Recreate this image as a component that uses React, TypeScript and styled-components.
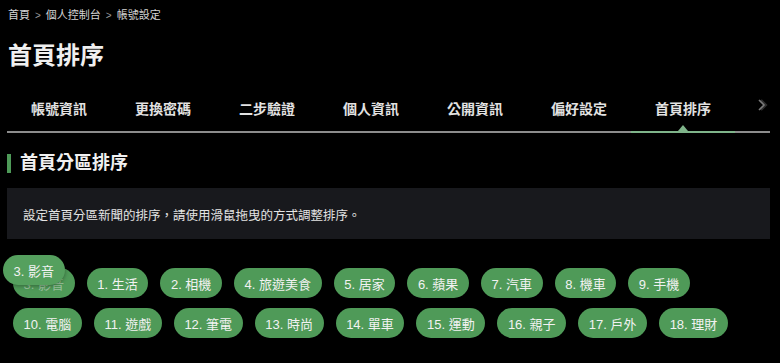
import styled, { createGlobalStyle } from 'styled-components';

const GlobalStyle = createGlobalStyle`
	html, body {
		margin: 0;
		padding: 0;
		background: #000;
	}
	body {
		font-family: 'Liberation Sans', 'Noto Sans CJK TC', sans-serif;
		color: #e6e6e6;
	}
`;

const Page = styled.div`
	width: 780px;
	height: 363px;
	box-sizing: border-box;
	padding: 0 10px 0 7px;
	position: relative;
	overflow: hidden;
`;

const Breadcrumb = styled.nav`
	display: flex;
	align-items: center;
	gap: 5px;
	padding: 9px 0 0 1px;
	height: 13px;
	font-size: 11px;
	line-height: 13px;
	color: #d4d4d4;
	.sep {
		color: #9a9a9a;
		font-size: 10px;
	}
`;

const Title = styled.h1`
	margin: 0;
	padding: 20px 0 0 1px;
	font-size: 24px;
	line-height: 28px;
	font-weight: bold;
	color: #f0f0f0;
`;

const TabBar = styled.div`
	margin-top: 26px;
	display: flex;
	align-items: stretch;
	border-bottom: 2px solid #8c8c8c;
	height: 35px;
`;

const Tab = styled.div<{ active?: boolean }>`
	position: relative;
	width: 104px;
	flex: none;
	text-align: center;
	font-size: 14px;
	font-weight: bold;
	line-height: 16px;
	padding-top: 5px;
	color: #e2e2e2;
	${(p) =>
		p.active &&
		`
		margin-bottom: -2px;
		border-bottom: 2px solid #7fb48a;
		&::after {
			content: '';
			position: absolute;
			left: 50%;
			bottom: 0;
			transform: translateX(-50%);
			border-left: 5px solid transparent;
			border-right: 5px solid transparent;
			border-bottom: 6px solid #7fb48a;
		}
	`}
`;

const More = styled.div`
	flex: 1;
	display: flex;
	justify-content: flex-end;
	padding: 2px 1px 0 0;
	svg {
		display: block;
	}
`;

const SectionTitle = styled.h2`
	margin: 19px 0 0;
	display: flex;
	align-items: center;
	gap: 9px;
	font-size: 18px;
	line-height: 22px;
	font-weight: bold;
	color: #f0f0f0;
	&::before {
		content: '';
		width: 4px;
		height: 19px;
		background: #4e9a58;
	}
`;

const Notice = styled.div`
	margin-top: 14px;
	height: 51px;
	box-sizing: border-box;
	background: #18191d;
	display: flex;
	align-items: center;
	padding: 2px 16px 0;
	font-size: 12.5px;
	color: #e4e4e4;
`;

const ChipList = styled.div`
	margin-top: 29px;
	padding-left: 6px;
	display: flex;
	flex-wrap: wrap;
	gap: 10px 12px;
	width: 740px;
`;

const Chip = styled.div<{ ghost?: boolean }>`
	height: 30px;
	box-sizing: border-box;
	padding: 0 10.6px;
	border-radius: 15px;
	background: #4f9a58;
	display: flex;
	align-items: center;
	font-size: 13px;
	color: ${(p) => (p.ghost ? 'rgba(240,240,240,0.45)' : '#f2f2f2')};
	white-space: nowrap;
`;

const DragChip = styled(Chip)`
	position: absolute;
	left: 3px;
	top: 255px;
	background: #55a05e;
	box-shadow: 0 1px 4px rgba(0, 0, 0, 0.35);
`;

const tabs = ['帳號資訊', '更換密碼', '二步驗證', '個人資訊', '公開資訊', '偏好設定', '首頁排序'];

const chips = [
	'3. 影音',
	'1. 生活',
	'2. 相機',
	'4. 旅遊美食',
	'5. 居家',
	'6. 蘋果',
	'7. 汽車',
	'8. 機車',
	'9. 手機',
	'10. 電腦',
	'11. 遊戲',
	'12. 筆電',
	'13. 時尚',
	'14. 單車',
	'15. 運動',
	'16. 親子',
	'17. 戶外',
	'18. 理財',
];

const App = () => {
	return (
		<>
			<GlobalStyle />
			<Page>
				<Breadcrumb>
					<span>首頁</span>
					<span className='sep'>&gt;</span>
					<span>個人控制台</span>
					<span className='sep'>&gt;</span>
					<span>帳號設定</span>
				</Breadcrumb>
				<Title>首頁排序</Title>
				<TabBar>
					{tabs.map((t) => (
						<Tab key={t} active={t === '首頁排序'}>
							{t}
						</Tab>
					))}
					<More>
						<svg width='12' height='14' viewBox='0 0 12 14'>
							<path d='M4 2 L9 7 L4 12' fill='none' stroke='#2e2e2e' strokeWidth='2.2' />
							<path d='M2 2 L7 7 L2 12' fill='none' stroke='#7a7a7a' strokeWidth='1.6' />
						</svg>
					</More>
				</TabBar>
				<SectionTitle>首頁分區排序</SectionTitle>
				<Notice>設定首頁分區新聞的排序，請使用滑鼠拖曳的方式調整排序。</Notice>
				<ChipList>
					{chips.map((c, i) => (
						<Chip key={c} ghost={i === 0}>
							{c}
						</Chip>
					))}
				</ChipList>
				<DragChip>3. 影音</DragChip>
			</Page>
		</>
	);
};

export default App;
